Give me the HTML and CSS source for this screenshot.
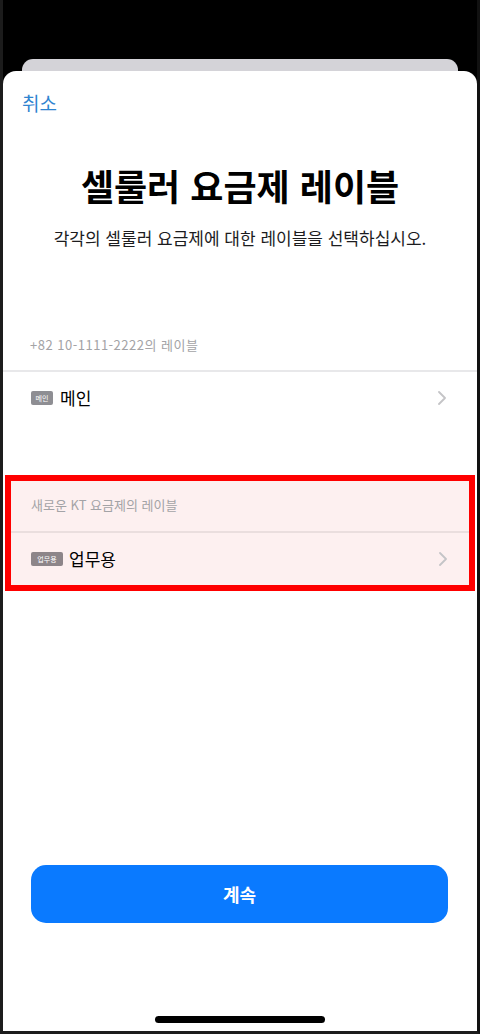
FILE: index.html
```html
<!DOCTYPE html>
<html lang="ko">
<head>
<meta charset="utf-8">
<title>셀룰러 요금제 레이블</title>
<link rel="stylesheet" href="styles.css">
</head>
<body>
<div class="screen">
  <div class="backcard"></div>
  <div class="sheet">
    <div class="cancel">취소</div>
    <h1 class="title">셀룰러 요금제 레이블</h1>
    <p class="subtitle">각각의 셀룰러 요금제에 대한 레이블을 선택하십시오.</p>

    <div class="group">
      <div class="group-label phone-label">+82 10-1111-2222의 레이블</div>
      <div class="divider"></div>
      <div class="row">
        <span class="badge">메인</span>
        <span class="row-text">메인</span>
        <svg class="chev" width="8" height="14" viewBox="0 0 8 14"><path d="M1 1 L7 7 L1 13" fill="none" stroke="#c4c4c7" stroke-width="1.8" stroke-linecap="round" stroke-linejoin="round"/></svg>
      </div>
    </div>

    <div class="highlight">
      <div class="group-label hl-label">새로운 KT 요금제의 레이블</div>
      <div class="divider hl-divider"></div>
      <div class="row hl-row">
        <span class="badge badge-wide">업무용</span>
        <span class="row-text">업무용</span>
        <svg class="chev" width="8" height="14" viewBox="0 0 8 14"><path d="M1 1 L7 7 L1 13" fill="none" stroke="#c4c4c7" stroke-width="1.8" stroke-linecap="round" stroke-linejoin="round"/></svg>
      </div>
    </div>

    <button class="continue">계속</button>
    <div class="home"></div>
  </div>
</div>
</body>
</html>
```
FILE: styles.css
```css
* { box-sizing: border-box; }
html, body { margin: 0; padding: 0; background: #000; }
body {
  font-family: "Noto Sans CJK KR", "Noto Sans", sans-serif;
}
.screen {
  width: 480px;
  height: 1034px;
  background: #000;
  border-left: 3px solid #1c1c1c;
  border-right: 3px solid #111;
  border-bottom: 3px solid #1c1c1c;
  padding-top: 59px;
  display: flex;
  flex-direction: column;
}
.backcard {
  height: 12px;
  margin: 0 19px;
  background: #d4d3d8;
  border-radius: 11px 11px 0 0;
}
.sheet {
  flex: 1;
  background: #fff;
  border-radius: 13px 13px 0 0;
  display: flex;
  flex-direction: column;
}
.cancel {
  padding: 20px 0 0 19px;
  font-size: 19px;
  line-height: 24px;
  color: #2f84d0;
}
.title {
  margin: 47px 0 0;
  text-align: center;
  font-size: 36px;
  line-height: 46px;
  font-weight: 700;
  color: #000;
}
.subtitle {
  margin: 16px 0 0;
  text-align: center;
  font-size: 17px;
  line-height: 28px;
  color: #1c1c1e;
}
.group { margin-top: 84px; }
.group-label {
  padding-left: 27px;
  font-size: 13px;
  line-height: 18px;
  color: #a3a3a6;
}
.phone-label { letter-spacing: 0.5px; }
.divider {
  margin-top: 16px;
  height: 2px;
  background: #e8e8ea;
}
.row {
  height: 52px;
  display: flex;
  align-items: center;
  padding: 0 31px 0 28px;
}
.badge {
  display: inline-flex;
  align-items: center;
  justify-content: center;
  width: 22px;
  height: 14px;
  border-radius: 2px;
  background: #8e8e93;
  color: #fff;
  font-size: 7px;
  line-height: 14px;
  margin-right: 7px;
}
.badge-wide { width: 32px; margin-right: 6px; background: #8d8589; }
.row-text {
  font-size: 17px;
  line-height: 22px;
  color: #000;
  flex: 1;
}
.chev { flex: none; }
.highlight {
  margin: 51px 2px 0;
  border: 6px solid #ff0000;
  background: #fdf0f0;
}
.hl-label { padding-left: 20px; padding-top: 15px; }
.hl-divider { margin-top: 17px; height: 1.5px; background: #eadede; }
.hl-row { padding: 0 22px 0 20px; }
.continue {
  margin: auto 29px 93px 28px;
  height: 58px;
  border: none;
  border-radius: 15px;
  background: #0a7aff;
  color: #fff;
  font-family: "Noto Sans CJK KR", "Noto Sans", sans-serif;
  font-size: 18px;
  font-weight: 700;
}
.home {
  margin: 0 auto 8px;
  width: 170px;
  height: 7px;
  border-radius: 4px;
  background: #000;
}
```
